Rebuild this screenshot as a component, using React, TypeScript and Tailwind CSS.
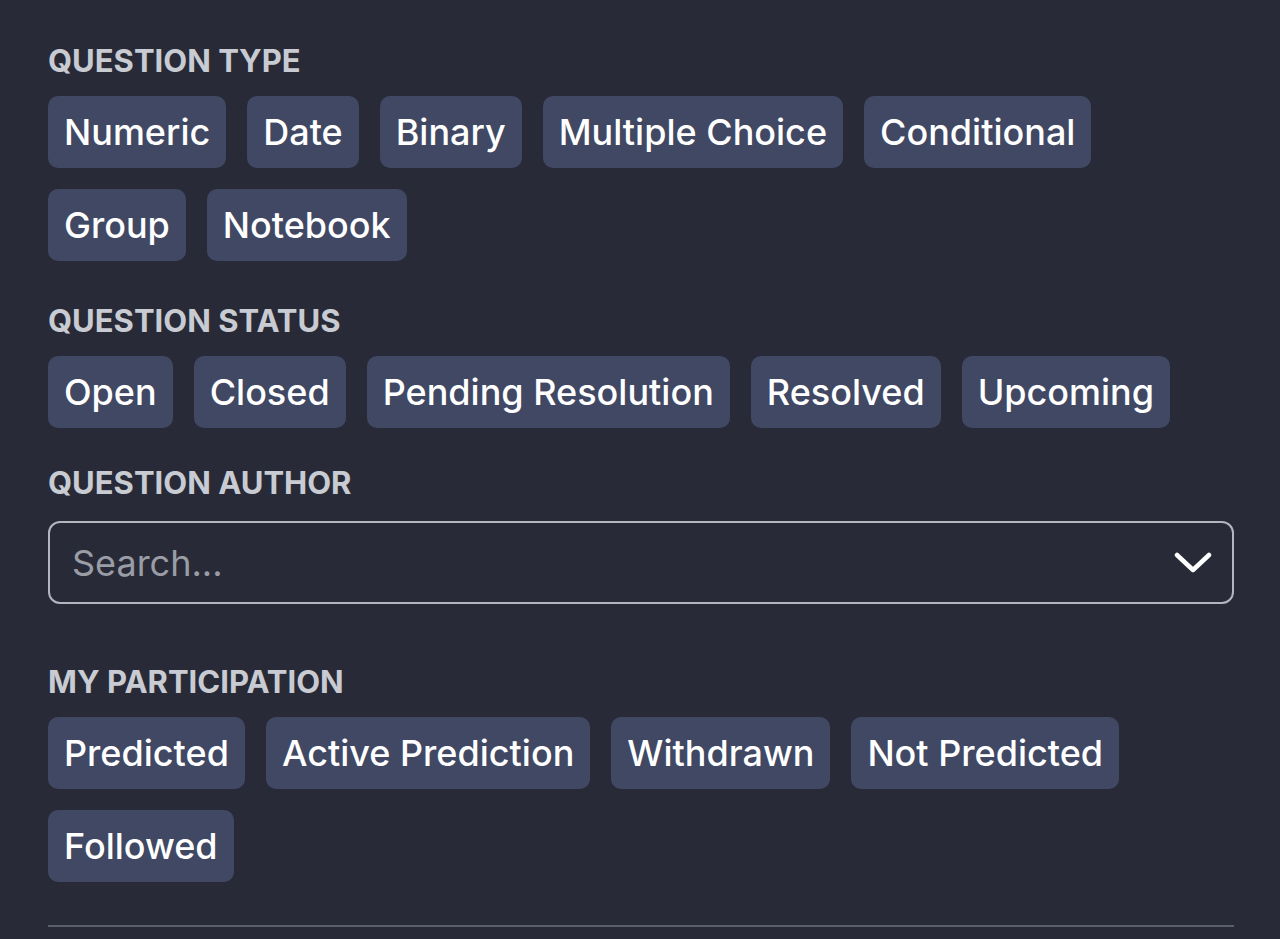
import React from 'react';

const typeOptions = ['Numeric', 'Date', 'Binary', 'Multiple Choice', 'Conditional', 'Group', 'Notebook'];
const statusOptions = ['Open', 'Closed', 'Pending Resolution', 'Resolved', 'Upcoming'];
const participationOptions = ['Predicted', 'Active Prediction', 'Withdrawn', 'Not Predicted', 'Followed'];

const Heading = ({ children }: { children: React.ReactNode }) => (
  <h3 className="text-[31px] leading-[36px] font-bold uppercase text-[#c9cbd3]">{children}</h3>
);

const Chips = ({ items }: { items: string[] }) => (
  <div className="mt-[17px] flex flex-wrap gap-x-[21px] gap-y-[21px]">
    {items.map((item) => (
      <button
        key={item}
        className="h-[72px] px-4 flex items-center rounded-[10px] bg-[#404864] text-[36px] font-medium text-white"
      >
        {item}
      </button>
    ))}
  </div>
);

export default function App() {
  return (
    <div
      className="min-h-[939px] w-full bg-[#282b37] pl-12 pr-[46px] pt-[43px]"
      style={{ fontFamily: 'Inter, "Noto Sans", sans-serif' }}
    >
      <section>
        <Heading>Question Type</Heading>
        <Chips items={typeOptions} />
      </section>

      <section className="mt-[42px]">
        <Heading>Question Status</Heading>
        <Chips items={statusOptions} />
      </section>

      <section className="mt-[37px]">
        <Heading>Question Author</Heading>
        <div className="mt-5 h-[83px] flex items-center justify-between rounded-[12px] border-2 border-[#b3b6bf] pl-[22px] pr-[20px]">
          <span className="text-[36px] text-[#9a9ca6]">Search...</span>
          <svg width="38" height="24" viewBox="0 0 38 24" fill="none">
            <path d="M3 4 L19 19 L35 4" stroke="white" strokeWidth="4.5" strokeLinecap="round" strokeLinejoin="round" />
          </svg>
        </div>
      </section>

      <section className="mt-[60px]">
        <Heading>My Participation</Heading>
        <Chips items={participationOptions} />
      </section>

      <div className="mt-[43px] h-[2px] bg-[#5b5f6c]" />
    </div>
  );
}
